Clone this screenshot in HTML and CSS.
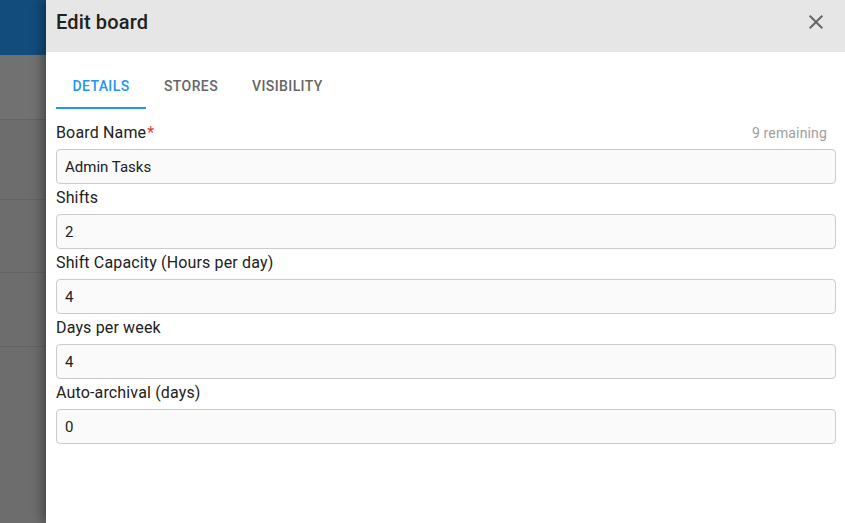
FILE: index.html
```html
<!DOCTYPE html>
<html lang="en">
<head>
    <meta charset="UTF-8">
    <meta name="viewport" content="width=device-width, initial-scale=1.0">
    <title>Edit board</title>
    <link rel="stylesheet" href="styles.css">
</head>
<body>
    <!-- dimmed page behind the drawer -->
    <div class="backdrop">
        <div class="bd-top"></div>
        <div class="bd-row r1"></div>
        <div class="bd-row r2"></div>
        <div class="bd-row r3"></div>
        <div class="bd-row r4"></div>
        <div class="bd-rest"></div>
    </div>

    <div class="drawer">
        <div class="drawer-head">
            <h1 class="title">Edit board</h1>
            <svg class="close" width="24" height="24" viewBox="0 0 24 24">
                <path d="M19 6.41L17.59 5 12 10.59 6.41 5 5 6.41 10.59 12 5 17.59 6.41 19 12 13.41 17.59 19 19 17.59 13.41 12z" fill="#666"/>
            </svg>
        </div>

        <div class="tabs">
            <div class="tab active">Details</div>
            <div class="tab">Stores</div>
            <div class="tab">Visibility</div>
        </div>

        <form class="form">
            <div class="field">
                <div class="label-row">
                    <label class="label">Board Name<span class="req">*</span></label>
                    <span class="hint">9 remaining</span>
                </div>
                <input class="input" type="text" value="Admin Tasks">
            </div>
            <div class="field">
                <div class="label-row"><label class="label">Shifts</label></div>
                <input class="input" type="text" value="2">
            </div>
            <div class="field">
                <div class="label-row"><label class="label">Shift Capacity (Hours per day)</label></div>
                <input class="input" type="text" value="4">
            </div>
            <div class="field">
                <div class="label-row"><label class="label">Days per week</label></div>
                <input class="input" type="text" value="4">
            </div>
            <div class="field">
                <div class="label-row"><label class="label">Auto-archival (days)</label></div>
                <input class="input" type="text" value="0">
            </div>
        </form>
    </div>
</body>
</html>
```

FILE: styles.css
```css
html,body{
    height: 100%;
}
body{
    margin: 0;
    display: flex;
    font-family: Roboto, "Liberation Sans", sans-serif;
    background-color: #6e6e6e;
    overflow: hidden;
}
.backdrop{
    width: 46px;
    display: flex;
    flex-direction: column;
    flex-shrink: 0;
}
.bd-top{
    height: 55px;
    background-color: #124c7d;
}
.bd-row{
    border-bottom: 1px solid #636363;
    background-color: #6d6d6d;
}
.r1{ height: 64px; background-color: #717171; }
.r2{ height: 79px; }
.r3{ height: 72px; }
.r4{ height: 73px; }
.bd-rest{
    flex: 1;
    background-color: #6d6d6d;
}
.drawer{
    flex: 1;
    background: #fff;
    box-shadow: -4px 0 10px rgba(0, 0, 0, 0.35);
    position: relative;
}
.drawer-head{
    height: 52px;
    box-sizing: border-box;
    padding: 0 17px 8px 10px;
    background-color: #e6e6e6;
    display: flex;
    justify-content: space-between;
    align-items: center;
}
.title{
    margin: 0;
    font-size: 20px;
    line-height: 20px;
    font-weight: 500;
    letter-spacing: 0.15px;
    color: #212121;
}
.close{
    display: block;
}
.tabs{
    display: flex;
    margin: 9px 0 0 10px;
}
.tab{
    min-width: 90px;
    height: 48px;
    box-sizing: border-box;
    padding: 4px 16px 0;
    border-bottom: 2px solid transparent;
    display: flex;
    justify-content: center;
    align-items: center;
    font-size: 14px;
    font-weight: 500;
    letter-spacing: 0.4px;
    text-transform: uppercase;
    color: #666;
}
.tab.active{
    color: #2196f3;
    border-bottom-color: #2196f3;
}
.form{
    margin: 10px 9px 0 10px;
}
.label-row{
    height: 30px;
    display: flex;
    justify-content: space-between;
    align-items: baseline;
}
.label{
    font-size: 16px;
    line-height: 28px;
    letter-spacing: 0.15px;
    color: #212121;
}
.req{
    color: #e53935;
    margin-left: 1px;
}
.hint{
    font-size: 14px;
    letter-spacing: 0.15px;
    color: #9e9e9e;
    padding-right: 9px;
}
.input{
    display: block;
    width: 100%;
    height: 35px;
    box-sizing: border-box;
    padding: 0 8px;
    border: 1px solid #cbcbcb;
    border-radius: 4px;
    background-color: #fafafa;
    font-family: Roboto, "Liberation Sans", sans-serif;
    font-size: 15px;
    color: #212121;
    outline: none;
}
```
